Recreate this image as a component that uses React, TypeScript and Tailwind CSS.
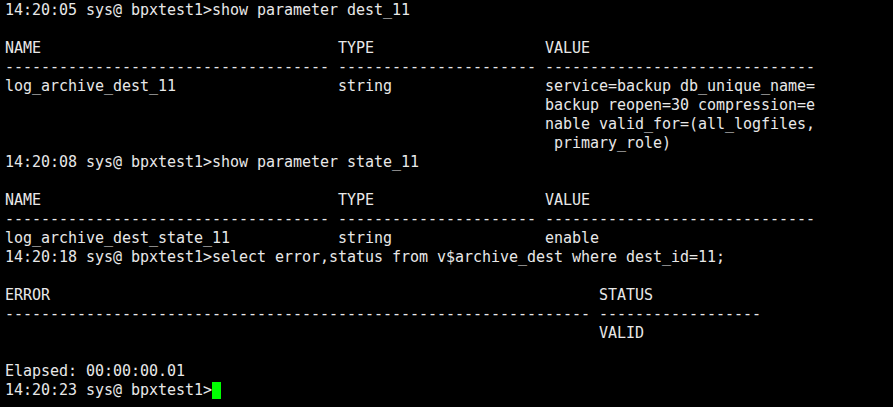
import React from "react";

const lines: string[] = [
  "14:20:05 sys@ bpxtest1>show parameter dest_11",
  "",
  "NAME                                 TYPE                   VALUE",
  "------------------------------------ ---------------------- ------------------------------",
  "log_archive_dest_11                  string                 service=backup db_unique_name=",
  "                                                            backup reopen=30 compression=e",
  "                                                            nable valid_for=(all_logfiles,",
  "                                                             primary_role)",
  "14:20:08 sys@ bpxtest1>show parameter state_11",
  "",
  "NAME                                 TYPE                   VALUE",
  "------------------------------------ ---------------------- ------------------------------",
  "log_archive_dest_state_11            string                 enable",
  "14:20:18 sys@ bpxtest1>select error,status from v$archive_dest where dest_id=11;",
  "",
  "ERROR                                                             STATUS",
  "----------------------------------------------------------------- ------------------",
  "                                                                  VALID",
  "",
  "Elapsed: 00:00:00.01",
];

export default function App() {
  return (
    <div className="w-[893px] h-[407px] bg-black overflow-hidden pl-[5px] pt-[1px] text-[#e8e8e8] text-[15px] leading-[19px] tracking-[-0.03px] font-['DejaVu_Sans_Mono',monospace]">
      {lines.map((l, i) => (
        <div key={i} className="whitespace-pre h-[19px]">
          {l}
        </div>
      ))}
      <div className="whitespace-pre h-[19px] flex items-center">
        <span>14:20:23 sys@ bpxtest1&gt;</span>
        <span className="inline-block w-[9px] h-[17px] bg-[#00ff00]" />
      </div>
    </div>
  );
}
